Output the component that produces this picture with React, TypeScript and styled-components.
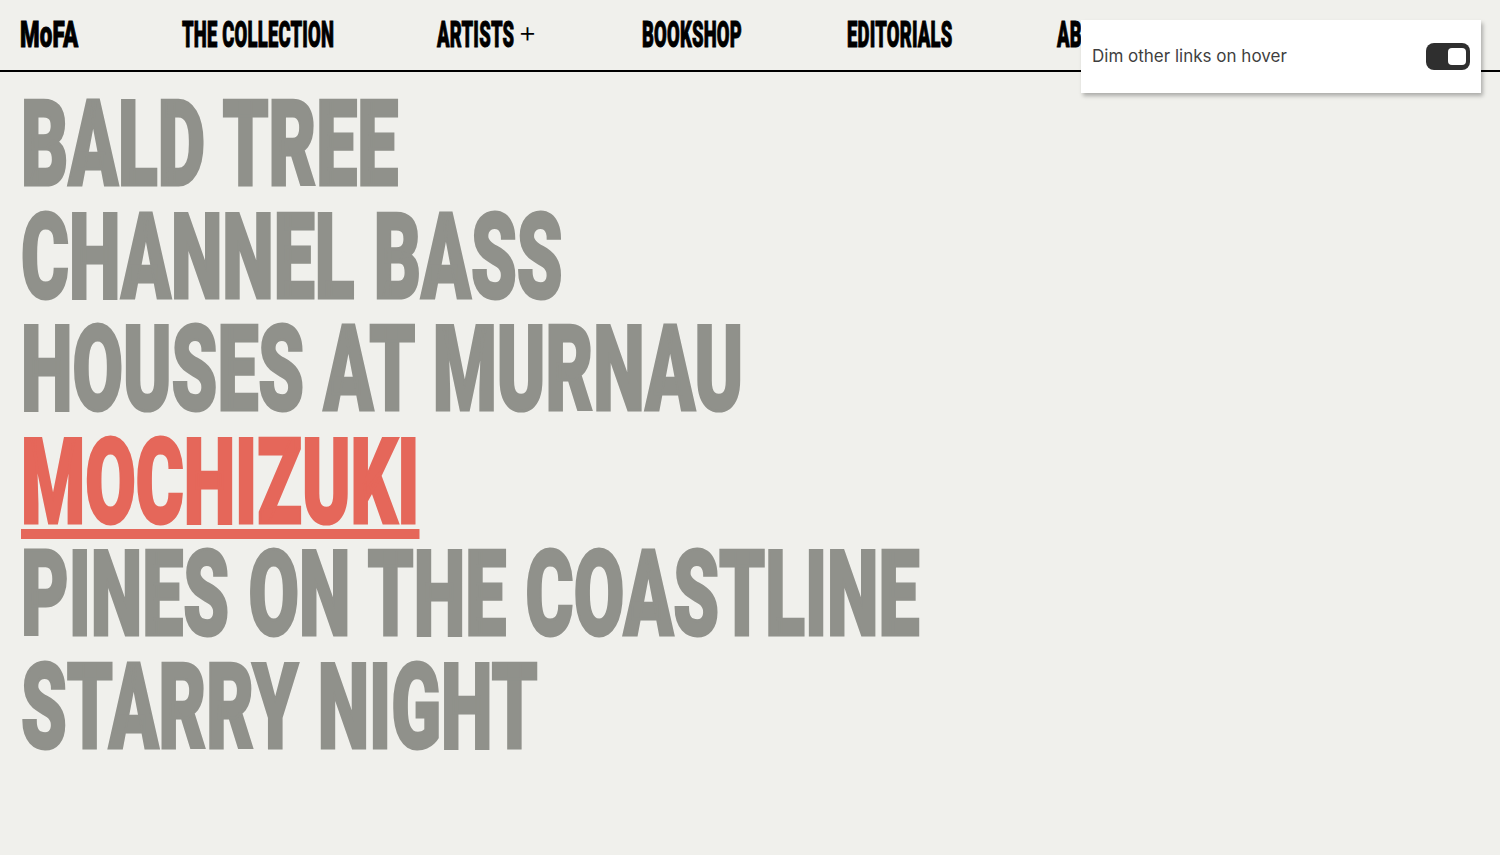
import React from "react";
import styled, { createGlobalStyle } from "styled-components";

const GlobalStyle = createGlobalStyle`
  html, body {
    margin: 0;
    padding: 0;
    background: #f0f0ec;
  }
  body {
    font-family: "Inter", "Noto Sans", sans-serif;
    overflow: hidden;
  }
  * { box-sizing: border-box; }
`;

const Page = styled.div`
  position: relative;
  width: 1500px;
  height: 855px;
  background: #f0f0ec;
`;

const Header = styled.header`
  height: 72px;
  border-bottom: 2px solid #000;
  display: grid;
  grid-template-columns: 59px 152px 102px 102px 107px 120px;
  column-gap: 103px;
  align-items: start;
  padding: 0 0 0 20px;
`;

const NavText = styled.span<{ $logo?: boolean }>`
  display: inline-block;
  font-family: "Roboto", "Liberation Sans", sans-serif;
  font-weight: 900;
  font-size: 36px;
  line-height: 1;
  color: #000;
  white-space: nowrap;
  letter-spacing: 0.4px;
  -webkit-text-stroke: 1px #000;
  transform: scaleX(${(p) => (p.$logo ? 0.62 : 0.512)});
  transform-origin: left top;
  margin-top: 17px;
`;

const NavItem = styled.a`
  display: flex;
  align-items: flex-start;
  text-decoration: none;
  position: relative;
`;

const Plus = styled.span`
  position: absolute;
  left: 81px;
  top: 17px;
  font-family: "Inter", sans-serif;
  font-weight: 300;
  font-size: 29px;
  line-height: 1;
  color: #000;
`;

const List = styled.ul`
  list-style: none;
  margin: 0;
  padding: 17px 0 0 21px;
`;

const Title = styled.li<{ $active?: boolean }>`
  display: block;
  height: 112.5px;
  font-family: "Roboto", "Liberation Sans", sans-serif;
  font-weight: 900;
  font-size: 119px;
  line-height: 112.5px;
  white-space: nowrap;
  letter-spacing: 0px;
  word-spacing: 2px;
  color: ${(p) => (p.$active ? "#e5675a" : "#90918b")};
  -webkit-text-stroke: 3px ${(p) => (p.$active ? "#e5675a" : "#90918b")};
  text-decoration: ${(p) => (p.$active ? "underline" : "none")};
  text-decoration-thickness: 10px;
  text-underline-offset: 6px;
  transform: scaleX(0.615);
  transform-origin: left center;
`;

const Popover = styled.div`
  position: absolute;
  left: 1081px;
  top: 20px;
  width: 400px;
  height: 73px;
  background: #fff;
  box-shadow: 2px 3px 4px rgba(0, 0, 0, 0.28);
  display: flex;
  align-items: center;
  justify-content: space-between;
  padding: 0 11px 0 11px;
`;

const PopLabel = styled.span`
  font-family: "Inter", sans-serif;
  font-size: 17px;
  color: #3f3f3f;
  margin-top: -1px;
`;

const Toggle = styled.button<{ $on?: boolean }>`
  width: 44px;
  height: 27px;
  border: none;
  border-radius: 8px;
  background: #2f2f2f;
  display: flex;
  align-items: center;
  justify-content: ${(p) => (p.$on ? "flex-end" : "flex-start")};
  padding: 0 4px;
  margin-top: -1px;
  cursor: pointer;
`;

const Knob = styled.span`
  display: block;
  width: 18px;
  height: 17px;
  border-radius: 4px;
  background: #fff;
`;

const navItems = ["MoFA", "THE COLLECTION", "ARTISTS", "BOOKSHOP", "EDITORIALS", "ABOUT"];
const titles = [
  "BALD TREE",
  "CHANNEL BASS",
  "HOUSES AT MURNAU",
  "MOCHIZUKI",
  "PINES ON THE COASTLINE",
  "STARRY NIGHT",
];

export default function App() {
  return (
    <Page>
      <GlobalStyle />
      <Header>
        {navItems.map((n) => (
          <NavItem key={n} href="#">
            <NavText $logo={n === "MoFA"}>{n}</NavText>
            {n === "ARTISTS" && <Plus>+</Plus>}
          </NavItem>
        ))}
      </Header>
      <List>
        {titles.map((t) => (
          <Title key={t} $active={t === "MOCHIZUKI"}>
            {t}
          </Title>
        ))}
      </List>
      <Popover>
        <PopLabel>Dim other links on hover</PopLabel>
        <Toggle $on aria-label="Dim other links on hover">
          <Knob />
        </Toggle>
      </Popover>
    </Page>
  );
}
